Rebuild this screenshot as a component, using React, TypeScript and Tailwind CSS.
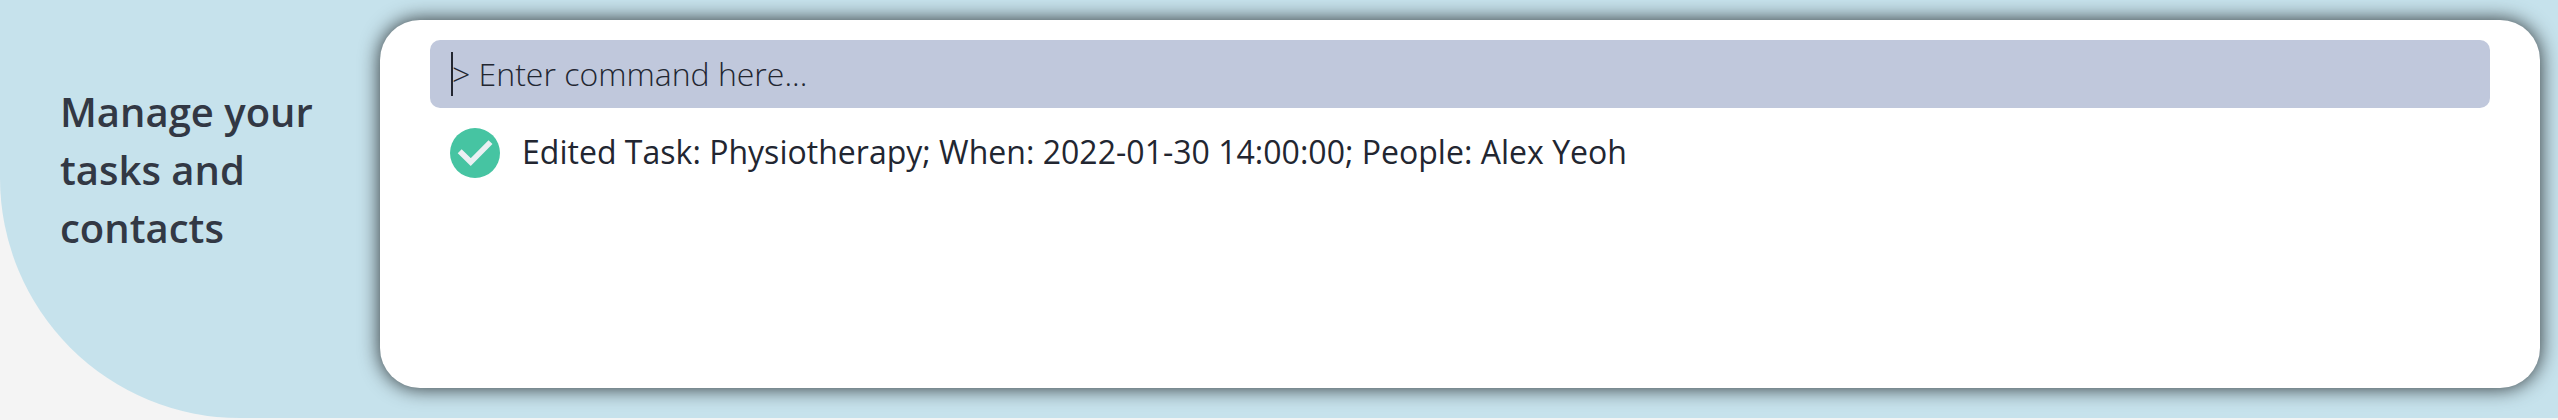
export default function App() {
  return (
    <div className="h-[420px] w-full overflow-hidden bg-[#f4f4f4] font-['Open_Sans',sans-serif]">
      <div className="flex h-[418px] w-full rounded-bl-[240px] bg-[#c6e2ec] pt-5 pr-[18px]">
        <aside className="w-[380px] shrink-0 pt-[63px] pl-[60px]">
          <h1 className="text-[40px] leading-[58px] font-semibold whitespace-nowrap text-[#323844]">
            Manage your
            <br />
            tasks and
            <br />
            contacts
          </h1>
        </aside>
        <main className="h-[368px] grow rounded-[40px] bg-white px-[50px] pt-5 shadow-[0_0_20px_rgba(0,0,0,0.8)]">
          <div className="flex h-[68px] items-center rounded-[10px] bg-[#c0c8dc] pl-[21px]">
            <span className="h-11 w-0.5 shrink-0 bg-[#222631]" />
            <span className="-ml-px text-[32px] leading-[44px] font-light whitespace-pre text-[#222631]">
              &gt; Enter command here...
            </span>
          </div>
          <div className="mt-5 flex h-[50px] items-center pl-5">
            <svg className="size-[50px] shrink-0" viewBox="0 0 50 50">
              <circle cx="25" cy="25" r="25" fill="#46c4a2" />
              <path d="M9.7 23.2 20.7 34.1 40.5 14.1" fill="none" stroke="#ebf0f3" strokeWidth="5.6" />
            </svg>
            <span className="ml-[22px] pb-[3px] text-[32px] leading-[44px] tracking-[0.02px] whitespace-pre text-[#222631]">
              Edited Task: Physiotherapy; When: 2022-01-30 14:00:00; People: Alex Yeoh
            </span>
          </div>
        </main>
      </div>
    </div>
  );
}
